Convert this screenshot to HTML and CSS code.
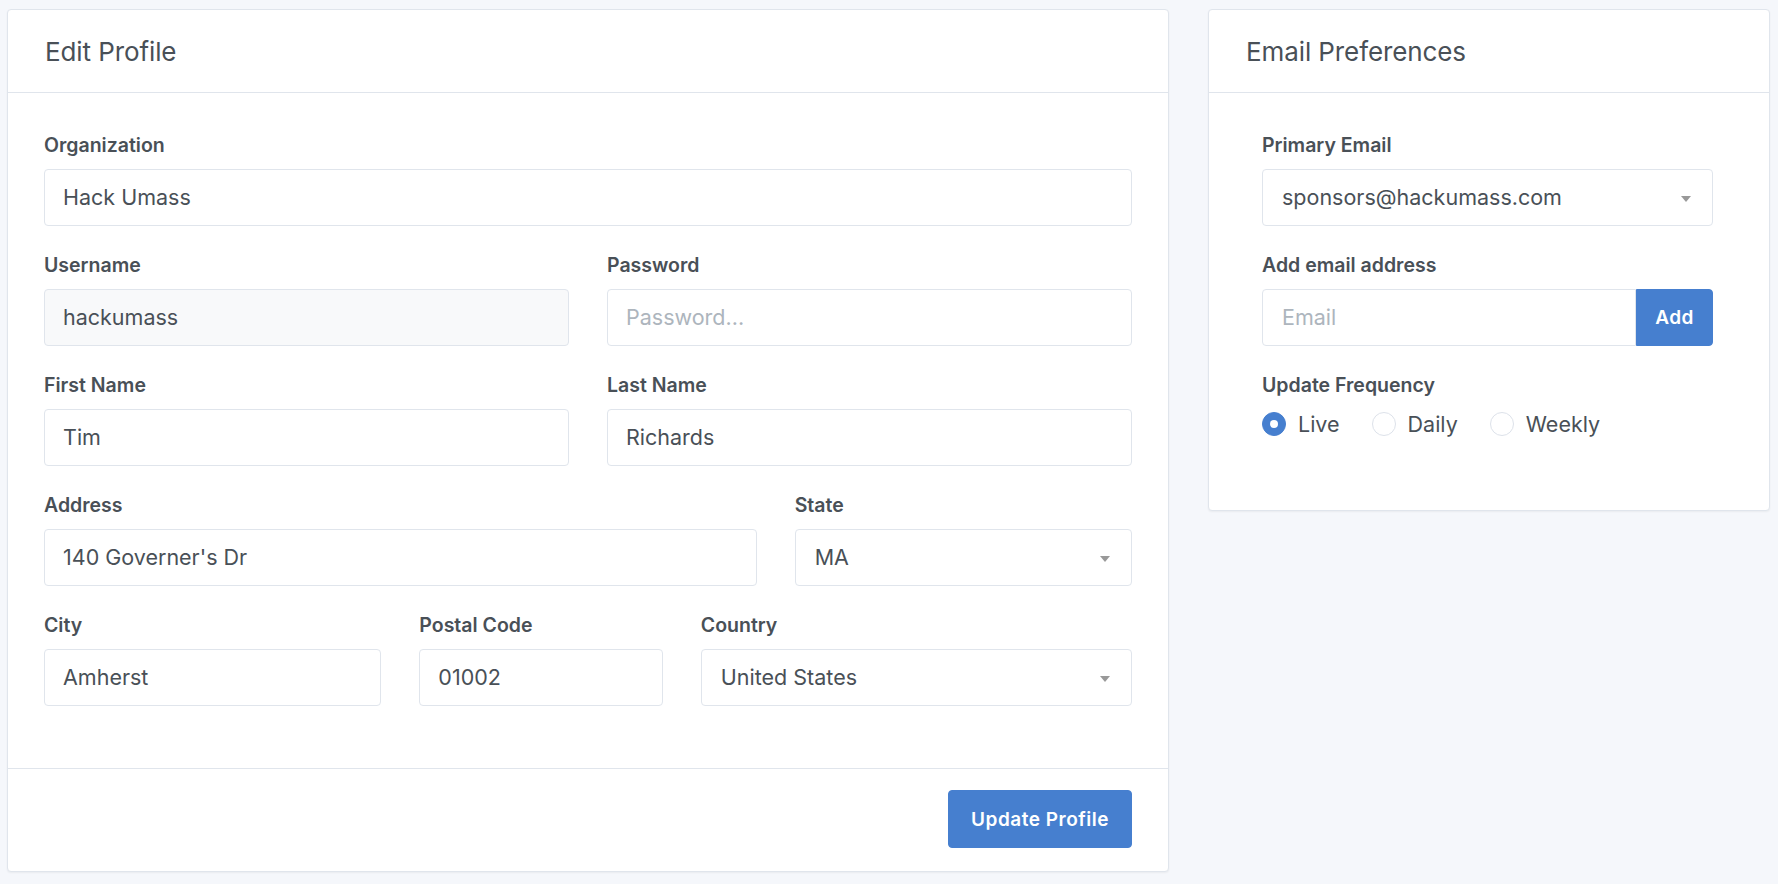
FILE: index.html
```html
<!DOCTYPE html>
<html lang="en">
<head>
<meta charset="utf-8">
<title>Edit Profile</title>
<link rel="stylesheet" href="styles.css">
</head>
<body>
<div class="page">
  <div class="card">
    <div class="card-header"><h3 class="card-title">Edit Profile</h3></div>
    <div class="card-body">
      <div class="row">
        <div class="group span-12">
          <label class="form-label">Organization</label>
          <div class="form-control">Hack Umass</div>
        </div>
      </div>
      <div class="row">
        <div class="group span-6">
          <label class="form-label">Username</label>
          <div class="form-control disabled">hackumass</div>
        </div>
        <div class="group span-6">
          <label class="form-label">Password</label>
          <div class="form-control placeholder">Password...</div>
        </div>
      </div>
      <div class="row">
        <div class="group span-6">
          <label class="form-label">First Name</label>
          <div class="form-control">Tim</div>
        </div>
        <div class="group span-6">
          <label class="form-label">Last Name</label>
          <div class="form-control">Richards</div>
        </div>
      </div>
      <div class="row">
        <div class="group span-8">
          <label class="form-label">Address</label>
          <div class="form-control">140 Governer's Dr</div>
        </div>
        <div class="group span-4">
          <label class="form-label">State</label>
          <div class="form-control select">MA<span class="caret"></span></div>
        </div>
      </div>
      <div class="row">
        <div class="group span-4">
          <label class="form-label">City</label>
          <div class="form-control">Amherst</div>
        </div>
        <div class="group span-3">
          <label class="form-label">Postal Code</label>
          <div class="form-control">01002</div>
        </div>
        <div class="group span-5">
          <label class="form-label">Country</label>
          <div class="form-control select">United States<span class="caret"></span></div>
        </div>
      </div>
    </div>
    <div class="card-footer">
      <button class="btn btn-primary">Update Profile</button>
    </div>
  </div>

  <div class="side">
    <div class="card">
      <div class="card-header"><h3 class="card-title">Email Preferences</h3></div>
      <div class="card-body wide">
        <div class="group">
          <label class="form-label">Primary Email</label>
          <div class="form-control select">sponsors@hackumass.com<span class="caret"></span></div>
        </div>
        <div class="group">
          <label class="form-label">Add email address</label>
          <div class="input-group">
            <div class="form-control placeholder grow">Email</div>
            <button class="btn btn-primary btn-append">Add</button>
          </div>
        </div>
        <div class="group last">
          <label class="form-label">Update Frequency</label>
          <div class="radios">
            <span class="radio"><span class="dot checked"></span>Live</span>
            <span class="radio"><span class="dot"></span>Daily</span>
            <span class="radio"><span class="dot"></span>Weekly</span>
          </div>
        </div>
      </div>
    </div>
  </div>
</div>
</body>
</html>
```

FILE: styles.css
```css
* { box-sizing: border-box; }
html, body { margin: 0; padding: 0; }
body {
  background: #f5f7fb;
  font-family: Inter, "Liberation Sans", sans-serif;
  color: #495057;
  width: 1778px;
  height: 884px;
  overflow: hidden;
}
.page {
  display: grid;
  grid-template-columns: 1162px 562px;
  column-gap: 39px;
  padding: 9px 8px 0 7px;
  align-items: start;
}
.card {
  background: #fff;
  border: 1px solid #e0e5ec;
  border-radius: 4px;
  box-shadow: 0 1px 2px 0 rgba(0,0,0,.05);
}
.card-header {
  height: 83px;
  border-bottom: 1px solid #e0e5ec;
  display: flex;
  align-items: center;
  padding: 0 36px 0 37px;
}
.card-title {
  margin: 0;
  font-size: 26px;
  font-weight: 400;
  color: #495057;
  letter-spacing: -0.1px;
}
.card-body {
  padding: 37px 36px 38px 36px;
}
.card-body.wide {
  padding: 37px 56px 71px 53px;
}
.row {
  display: grid;
  grid-template-columns: repeat(12, 1fr);
  column-gap: 38px;
}
.span-12 { grid-column: span 12; }
.span-8 { grid-column: span 8; }
.span-6 { grid-column: span 6; }
.span-5 { grid-column: span 5; }
.span-4 { grid-column: span 4; }
.span-3 { grid-column: span 3; }
.group { margin-bottom: 24px; }
.group.last { margin-bottom: 0; }
.form-label {
  display: block;
  font-size: 19.5px;
  font-weight: 600;
  line-height: 30px;
  margin-bottom: 9px;
  color: #495057;
}
.form-control {
  position: relative;
  height: 57px;
  border: 1.5px solid #e0e5ec;
  border-radius: 4px;
  background: #fff;
  font-size: 21.5px;
  line-height: 54px;
  padding: 0 18px;
  color: #495057;
  white-space: nowrap;
}
.form-control.disabled { background: #f8f9fa; }
.form-control.placeholder { color: #adb5bd; }
.form-control.select { padding-left: 19px; }
.caret {
  position: absolute;
  right: 21px;
  top: 26px;
  width: 0;
  height: 0;
  border-left: 5.5px solid transparent;
  border-right: 5.5px solid transparent;
  border-top: 6px solid #999;
}
.card-footer {
  border-top: 1px solid #e0e5ec;
  padding: 21px 36px 23px;
  display: flex;
  justify-content: flex-end;
}
.btn {
  font-family: Inter, "Liberation Sans", sans-serif;
  border: 1px solid #467fcf;
  background: #467fcf;
  color: #fff;
  font-size: 19px;
  font-weight: 600;
  letter-spacing: 0.5px;
  border-radius: 4px;
  height: 58px;
  padding: 0;
}
.card-footer .btn { width: 184px; }
.input-group { display: flex; }
.grow {
  flex: 1;
  border-top-right-radius: 0;
  border-bottom-right-radius: 0;
  padding-left: 19px;
}
.btn-append {
  width: 77px;
  height: 57px;
  border-top-left-radius: 0;
  border-bottom-left-radius: 0;
}
.radios {
  display: flex;
  align-items: center;
  height: 30px;
  font-size: 21.5px;
}
.radio {
  display: flex;
  align-items: center;
  margin-right: 32px;
}
.dot {
  width: 24px;
  height: 24px;
  border-radius: 50%;
  border: 1.5px solid #dde2ea;
  background: #fff;
  margin-right: 12px;
  display: inline-block;
}
.dot.checked {
  background: #467fcf;
  border-color: #467fcf;
  position: relative;
}
.dot.checked::after {
  content: "";
  position: absolute;
  width: 8px;
  height: 8px;
  border-radius: 50%;
  background: #fff;
  left: 6.5px;
  top: 6.5px;
}
```
